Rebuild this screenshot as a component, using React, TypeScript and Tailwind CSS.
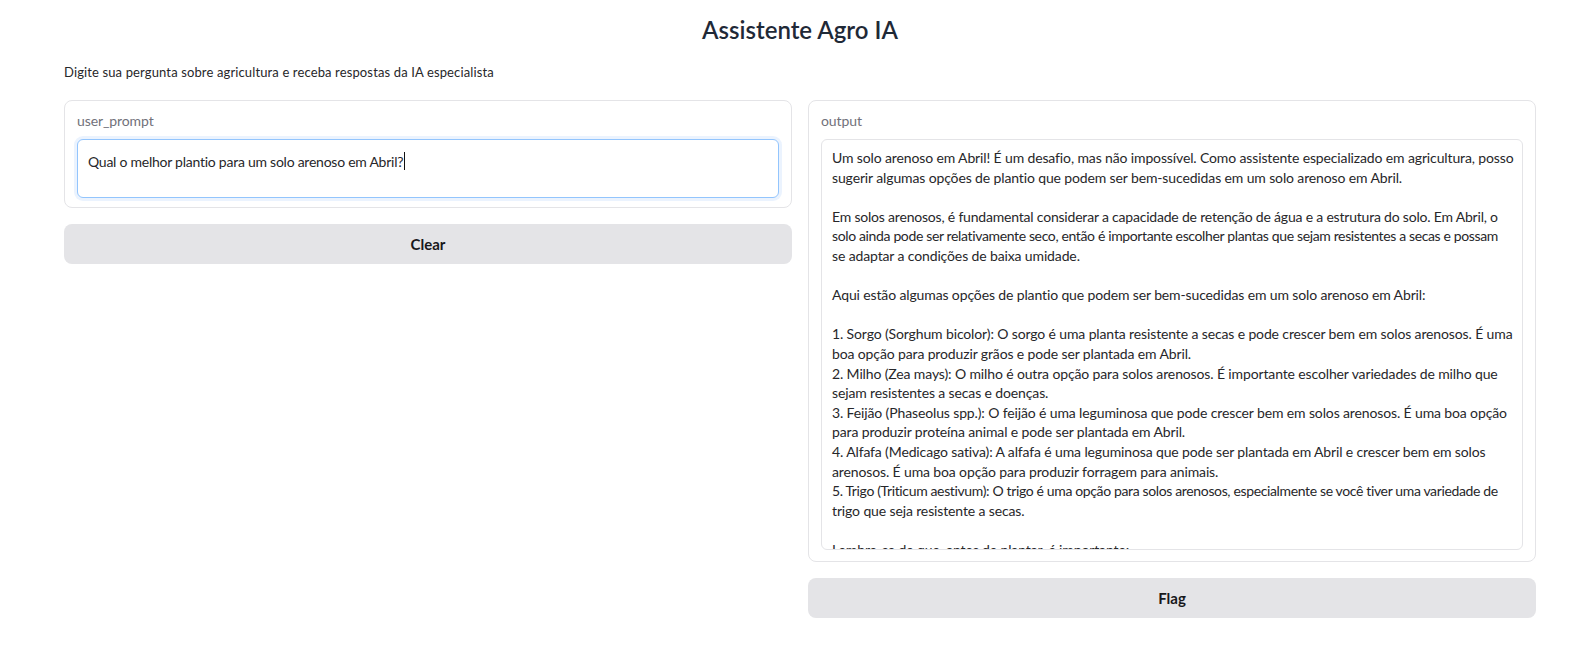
import React from "react";

const outputLines: [string, string][] = [
  ["Um solo arenoso em Abril! É um desafio, mas não impossível. Como assistente especializado em agricultura, posso", "tracking-[-0.13px]"],
  ["sugerir algumas opções de plantio que podem ser bem-sucedidas em um solo arenoso em Abril.", "tracking-[-0.13px]"],
  ["", ""],
  ["Em solos arenosos, é fundamental considerar a capacidade de retenção de água e a estrutura do solo. Em Abril, o", "tracking-[-0.2px]"],
  ["solo ainda pode ser relativamente seco, então é importante escolher plantas que sejam resistentes a secas e possam", "tracking-[-0.36px]"],
  ["se adaptar a condições de baixa umidade.", "tracking-[-0.13px]"],
  ["", ""],
  ["Aqui estão algumas opções de plantio que podem ser bem-sucedidas em um solo arenoso em Abril:", "tracking-[-0.13px]"],
  ["", ""],
  ["1. Sorgo (Sorghum bicolor): O sorgo é uma planta resistente a secas e pode crescer bem em solos arenosos. É uma", "tracking-[-0.13px]"],
  ["boa opção para produzir grãos e pode ser plantada em Abril.", "tracking-[-0.13px]"],
  ["2. Milho (Zea mays): O milho é outra opção para solos arenosos. É importante escolher variedades de milho que", "tracking-[-0.13px]"],
  ["sejam resistentes a secas e doenças.", "tracking-[-0.13px]"],
  ["3. Feijão (Phaseolus spp.): O feijão é uma leguminosa que pode crescer bem em solos arenosos. É uma boa opção", "tracking-[-0.13px]"],
  ["para produzir proteína animal e pode ser plantada em Abril.", "tracking-[-0.13px]"],
  ["4. Alfafa (Medicago sativa): A alfafa é uma leguminosa que pode ser plantada em Abril e crescer bem em solos", "tracking-[-0.13px]"],
  ["arenosos. É uma boa opção para produzir forragem para animais.", "tracking-[-0.13px]"],
  ["5. Trigo (Triticum aestivum): O trigo é uma opção para solos arenosos, especialmente se você tiver uma variedade de", "tracking-[-0.36px]"],
  ["trigo que seja resistente a secas.", "tracking-[-0.13px]"],
  ["", ""],
  ["Lembre-se de que, antes de plantar, é importante:", "tracking-[-0.13px]"],
];

export default function App() {
  return (
    <div className="min-h-screen bg-white pl-[64px] pr-[56px] pt-[14px] font-['Lato',sans-serif] text-[#27272a]">
      <h1 className="h-[32px] text-center text-[24px] font-semibold leading-[32px] text-[#1f2937]">
        Assistente Agro IA
      </h1>
      <p className="mt-[17px] text-[13px] leading-[18px] tracking-[0.13px] text-[#27272a]">
        Digite sua pergunta sobre agricultura e receba respostas da IA especialista
      </p>

      <div className="mt-[19px] flex gap-4">
        {/* Left column */}
        <div className="flex w-[728px] flex-col gap-4">
          <div className="rounded-lg border border-[#e4e4e7] bg-white px-3 pb-[9px] pt-[10px]">
            <div className="mb-2 text-[14px] leading-[20px] tracking-[-0.1px] text-[#71717a]">user_prompt</div>
            <div className="h-[59px] rounded-md border border-[#93c5fd] bg-white px-[10px] py-[9px] text-[14px] leading-[20px] tracking-[-0.25px] shadow-[0_0_0_3px_rgba(219,234,254,0.55)]">
              Qual o melhor plantio para um solo arenoso em Abril?
              <span className="ml-px inline-block h-[18px] w-px translate-y-[3px] bg-[#111]" />
            </div>
          </div>
          <button className="h-[40px] w-full rounded-lg bg-[#e4e4e7] text-[15px] font-bold text-[#18181b]">
            Clear
          </button>
        </div>

        {/* Right column */}
        <div className="flex w-[728px] flex-col gap-4">
          <div className="rounded-lg border border-[#e4e4e7] bg-white px-3 pb-[11px] pt-[10px]">
            <div className="mb-2 text-[14px] leading-[20px] tracking-[-0.1px] text-[#71717a]">output</div>
            <div className="h-[411px] overflow-hidden rounded-md border border-[#e4e4e7] bg-white px-[10px] pt-[8px] text-[14px] leading-[19.6px]">
              {outputLines.map(([l, t], i) => (
                <div key={i} className={`h-[19.6px] whitespace-pre ${t}`}>
                  {l}
                </div>
              ))}
            </div>
          </div>
          <button className="h-[40px] w-full rounded-lg bg-[#e4e4e7] text-[15px] font-bold text-[#18181b]">
            Flag
          </button>
        </div>
      </div>
    </div>
  );
}
